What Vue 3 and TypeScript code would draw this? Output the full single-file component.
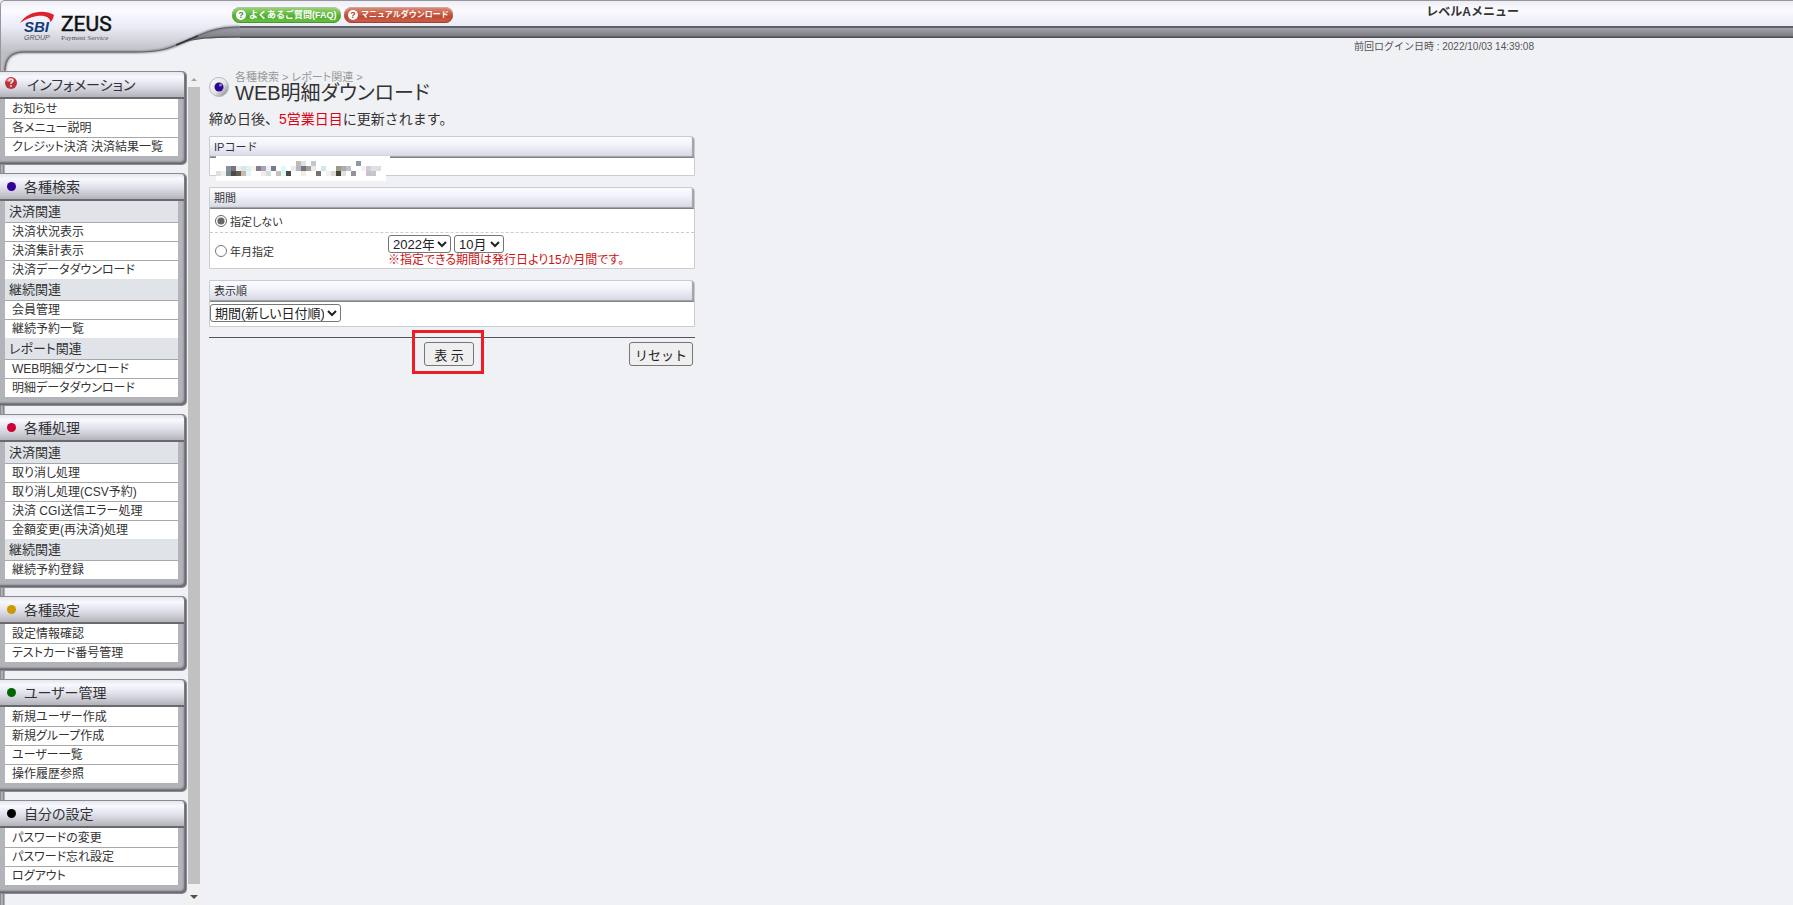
<script setup lang="ts">
import { ref } from 'vue'

interface MenuGroup {
  title: string
  tone: string
  rows: { text: string; sub?: boolean }[]
}

const item = (text: string) => ({ text })
const sub = (text: string) => ({ text, sub: true })

const menu: MenuGroup[] = [
  {
    title: 'インフォメーション',
    tone: 'help',
    rows: [item('お知らせ'), item('各メニュー説明'), item('クレジット決済 決済結果一覧')],
  },
  {
    title: '各種検索',
    tone: 'indigo',
    rows: [
      sub('決済関連'),
      item('決済状況表示'),
      item('決済集計表示'),
      item('決済データダウンロード'),
      sub('継続関連'),
      item('会員管理'),
      item('継続予約一覧'),
      sub('レポート関連'),
      item('WEB明細ダウンロード'),
      item('明細データダウンロード'),
    ],
  },
  {
    title: '各種処理',
    tone: 'red',
    rows: [
      sub('決済関連'),
      item('取り消し処理'),
      item('取り消し処理(CSV予約)'),
      item('決済 CGI送信エラー処理'),
      item('金額変更(再決済)処理'),
      sub('継続関連'),
      item('継続予約登録'),
    ],
  },
  { title: '各種設定', tone: 'gold', rows: [item('設定情報確認'), item('テストカード番号管理')] },
  {
    title: 'ユーザー管理',
    tone: 'green',
    rows: [item('新規ユーザー作成'), item('新規グループ作成'), item('ユーザー一覧'), item('操作履歴参照')],
  },
  {
    title: '自分の設定',
    tone: 'black',
    rows: [item('パスワードの変更'), item('パスワード忘れ設定'), item('ログアウト')],
  },
]

const period = ref('none')
const year = ref('2022年')
const month = ref('10月')
const order = ref('期間(新しい日付順)')

// Masked code: column, row, colour of each 5px cell
const mask: [number, number, string][] = [
  [0, 2, '#e4dfdf'], [1, 2, '#f5efec'], [2, 1, '#8493a0'], [2, 2, '#7b8b98'], [3, 1, '#7b757b'], [3, 2, '#4b4a48'],
  [4, 1, '#f0eeee'], [4, 2, '#625f58'], [5, 1, '#e2e2e2'], [5, 2, '#c5bcae'], [6, 1, '#d8f3f7'], [6, 2, '#e4f5f7'],
  [7, 1, '#faf2e8'], [8, 1, '#847c86'], [9, 1, '#a5a3c0'], [9, 2, '#f6ebe1'], [10, 1, '#e8f2f5'], [10, 2, '#d2dee2'],
  [11, 1, '#737b84'], [12, 2, '#c9c1b6'], [13, 1, '#defafa'], [13, 2, '#defafa'], [14, 2, '#4b4a48'], [15, 1, '#eeece8'],
  [16, 0, '#c0bdae'], [16, 1, '#b4b8bd'], [17, 0, '#d8e4e8'], [17, 1, '#75727e'], [18, 1, '#a59b9d'], [17, 2, '#f3ece5'],
  [19, 0, '#c8c8cb'], [19, 1, '#e9ecef'], [20, 2, '#77736f'], [21, 1, '#d6e7ec'], [22, 2, '#eef3f4'], [23, 2, '#e0d8d2'],
  [24, 1, '#a39a83'], [24, 2, '#45423a'], [25, 1, '#a7adb2'], [25, 2, '#e4e0dc'], [26, 1, '#bfc0c3'], [27, 2, '#92939d'],
  [28, 0, '#8f99a1'], [29, 1, '#f6eff6'], [30, 1, '#d4cad9'], [30, 2, '#cbc1cd'], [31, 1, '#d8e3e6'], [31, 2, '#c8c5c8'],
  [32, 1, '#e2dede'],
]
</script>

<template>
  <div class="page">
    <header class="top">
      <div class="band">
        <nav class="pills">
          <a class="pill pill-green" href="#"><span class="q">?</span>よくあるご質問(FAQ)</a>
          <a class="pill pill-red" href="#"><span class="q">?</span><span class="small">マニュアルダウンロード</span></a>
        </nav>
        <strong class="level">レベルAメニュー</strong>
      </div>
      <p class="login">前回ログイン日時 : 2022/10/03 14:39:08</p>
      <svg class="corner" width="240" height="71" viewBox="0 0 240 71" role="img" aria-label="SBI GROUP ZEUS Payment Service">
        <defs>
          <linearGradient id="metal" gradientUnits="userSpaceOnUse" x1="0" y1="0" x2="0" y2="53">
            <stop offset="0" stop-color="#ededf4" />
            <stop offset=".2" stop-color="#fbfbff" />
            <stop offset=".5" stop-color="#eaecf6" />
            <stop offset="1" stop-color="#bdbec4" />
          </linearGradient>
          <linearGradient id="bar" gradientUnits="userSpaceOnUse" x1="0" y1="27" x2="0" y2="38">
            <stop offset="0" stop-color="#a3a4ab" />
            <stop offset="1" stop-color="#7c7c83" />
          </linearGradient>
          <filter id="soft"><feGaussianBlur stdDeviation="1" /></filter>
        </defs>
        <rect width="240" height="71" fill="#f0f1f5" />
        <path d="M240 27C213 27 202 34 180 43C196 38 207 37 240 37Z" fill="url(#bar)" />
        <path d="M240 37C207 37 196 38 180 43" fill="none" stroke="#55555b" stroke-width="1.5" />
        <path d="M0 0H240V27C213 27 202 34 184 42C168 49 160 52 135 52H24C10 52 5 60 5 71H0Z" fill="url(#metal)" />
        <path d="M240 27C213 27 202 34 184 42C168 49 160 52 135 52H24C10 52 5 60 5 71" fill="none" stroke="#77777e" stroke-width="2" filter="url(#soft)" />
        <path d="M240 27C213 27 202 34 184 42C168 49 160 52 135 52H24C10 52 5 60 5 71" fill="none" stroke="#5d5d63" />
        <path d="M198 36C190 39 184 42 176 45" fill="none" stroke="#333" stroke-width="1.5" />
        <path d="M.5 71V5Q.5 .5 5 .5H240" fill="none" stroke="#96969c" />
        <text x="24" y="32" class="sbi">SBI</text>
        <path d="M20 23C28 11 44 9 54 15C53 19 52 21 50 22C51 15 36 12 20 23Z" fill="#e0202c" />
        <text x="24" y="40" class="group">GROUP</text>
        <text x="61" y="31" class="zeus">ZEUS</text>
        <text x="61" y="40" class="pay">Payment Service</text>
      </svg>
    </header>

    <div class="body">
      <aside class="side">
        <section v-for="g in menu" :key="g.title" class="group-box">
          <h2 class="group-head">
            <svg v-if="g.tone === 'help'" class="help" width="14" height="14" viewBox="0 0 14 14" aria-hidden="true">
              <circle cx="7" cy="7" r="6" fill="#b8323a" />
              <ellipse cx="6" cy="4" rx="4" ry="2" fill="#dc7a7e" />
              <path d="M5 5Q5 3 7 3T9 5Q9 6 7 7V8M7 9V11" fill="none" stroke="#fff" stroke-width="1.2" />
            </svg>
            <i v-else class="dot" :class="g.tone"></i>
            {{ g.title }}
          </h2>
          <ul class="rows">
            <li v-for="(r, i) in g.rows" :key="i" :class="r.sub ? 'sub' : 'item'">
              <span v-if="r.sub">{{ r.text }}</span>
              <a v-else href="#">{{ r.text }}</a>
            </li>
          </ul>
        </section>
      </aside>
      <div class="scroll" aria-hidden="true">
        <svg width="12" height="16" viewBox="0 0 12 16"><path d="M3 10L6 7L9 10Z" fill="#a3a3a3" /></svg>
        <div class="thumb"></div>
        <svg width="12" height="21" viewBox="0 0 12 21"><path d="M2 11H10L6 15Z" fill="#505050" /></svg>
      </div>

      <main class="main">
        <div class="title">
          <svg class="orb" width="20" height="22" viewBox="0 0 20 22" aria-hidden="true">
            <defs>
              <linearGradient id="orb" x1="0" y1="0" x2="1" y2="1">
                <stop offset="0" stop-color="#fff" />
                <stop offset=".55" stop-color="#e4e4e6" />
                <stop offset="1" stop-color="#77777b" />
              </linearGradient>
            </defs>
            <circle cx="10" cy="11" r="9.5" fill="url(#orb)" stroke="#b9b9bd" />
            <circle cx="10" cy="11" r="4.5" fill="#2c0894" />
            <circle cx="11.5" cy="9" r="1.5" fill="#8f80c8" />
          </svg>
          <div>
            <p class="crumbs">各種検索 &gt; レポート関連 &gt;</p>
            <h1>WEB明細ダウンロード</h1>
          </div>
        </div>
        <p class="notice">締め日後、<em>5営業日目</em>に更新されます。</p>

        <form @submit.prevent>
          <section class="box">
            <h3>IPコード</h3>
            <div class="cell code">
              <svg class="mask" width="174" height="25" viewBox="0 0 174 25" role="img" aria-label="IPコード">
                <path d="M0 0H174V9H170V25H0Z" fill="#fff" />
                <rect v-for="(m, i) in mask" :key="i" :x="m[0] * 5" :y="m[1] * 5 + 5" width="5" height="5" :fill="m[2]" />
              </svg>
            </div>
          </section>

          <section class="box">
            <h3>期間</h3>
            <div class="cell line first">
              <label><input v-model="period" type="radio" name="period" value="none" />指定しない</label>
            </div>
            <div class="cell line second">
              <label><input v-model="period" type="radio" name="period" value="month" />年月指定</label>
              <div>
                <div class="picks">
                  <select v-model="year" class="year" aria-label="年"><option>2022年</option></select>
                  <select v-model="month" class="month" aria-label="月"><option>10月</option></select>
                </div>
                <p class="warn">※指定できる期間は発行日より15か月間です。</p>
              </div>
            </div>
          </section>

          <section class="box">
            <h3>表示順</h3>
            <div class="cell sort">
              <select v-model="order" class="order" aria-label="表示順"><option>期間(新しい日付順)</option></select>
            </div>
          </section>

          <div class="actions">
            <span class="mark"><button type="submit" class="show">表 示</button></span>
            <button type="reset" class="reset">リセット</button>
          </div>
        </form>
      </main>
    </div>
  </div>
</template>

<style>
body {
  margin: 0;
  background: #f0f1f5;
}
</style>

<style scoped>
.page {
  min-height: 100vh;
  box-sizing: border-box;
  display: flex;
  flex-direction: column;
  color: #333;
  font-family: "Liberation Sans", "Noto Sans CJK JP", sans-serif;
  font-size: 12px;
}
h1, h2, h3, p, ul {
  margin: 0;
  padding: 0;
  font-weight: normal;
}
a {
  color: inherit;
  text-decoration: none;
}
.top {
  position: relative;
  height: 71px;
}
.band {
  box-sizing: border-box;
  height: 38px;
  padding: 7px 274px 0 232px;
  display: flex;
  justify-content: space-between;
  align-items: flex-start;
  background: linear-gradient(#96969c 1px, #ededf4 1px, #fbfbff 10px, #eaecf6 26px, #5f5f65 26px, #5f5f65 28px, #a3a4ab 28px, #7c7c83 36px, #4c4c52 37px);
}
.pills {
  position: relative;
  z-index: 1;
  display: flex;
  gap: 3px;
}
.pill {
  box-sizing: border-box;
  width: 109px;
  height: 16px;
  padding-left: 4px;
  display: flex;
  align-items: center;
  gap: 3px;
  border-radius: 8px;
  color: #fff;
  font-size: 9px;
  font-weight: bold;
  line-height: 16px;
  white-space: nowrap;
}
.small {
  font-size: 8px;
}
.pill-green {
  background: linear-gradient(#9bd67c, #52ae2e 60%, #6cc446);
  box-shadow: inset 0 -1px 1px #4b8e2e, inset 0 1px 1px #b4c8a8;
}
.pill-red {
  background: linear-gradient(#dc8c78, #bf4a33 60%, #cf6550);
  box-shadow: inset 0 -1px 1px #96402f, inset 0 1px 1px #d3aaa0;
}
.q {
  width: 10px;
  height: 10px;
  border-radius: 5px;
  background: #fff;
  color: #4a8a34;
  font-size: 9px;
  line-height: 10px;
  text-align: center;
}
.pill-red .q {
  color: #b04030;
}
.level {
  font-size: 12px;
  line-height: 11px;
}
.login {
  padding: 1px 259px 0 0;
  text-align: right;
  font-size: 10px;
  line-height: 16px;
  color: #555;
}
.corner {
  position: absolute;
  left: 0;
  top: 0;
}
.sbi {
  font: italic bold 15px "Liberation Sans", sans-serif;
  fill: #173a78;
}
.group {
  font: italic 7px "Liberation Sans", sans-serif;
  fill: #555;
}
.zeus {
  font: 21px Roboto, sans-serif;
  fill: #111;
  stroke: #111;
  stroke-width: .5px;
}
.pay {
  font: 7px "Liberation Serif", serif;
  fill: #555;
}
.body {
  flex: 1;
  display: flex;
}
.side {
  width: 188px;
  padding-bottom: 10px;
  box-sizing: border-box;
  display: flex;
  flex-direction: column;
  gap: 8px;
  background: linear-gradient(90deg, #8b8b91 1px, #b4b5bb 1px, #a5a6ac 3px, #707076 4px, #f0f1f5 5px);
}
.group-box {
  width: 187px;
  box-sizing: border-box;
  padding: 0 8px 8px 0;
  border: solid #8a8a90;
  border-width: 1px 1px 1px 0;
  border-radius: 0 5px 5px 0;
  background: linear-gradient(#b6b7bd, #b2b3b9);
  box-shadow: inset -2px -2px 2px #66666c;
}
.group-head {
  height: 27px;
  box-sizing: border-box;
  margin-right: -6px;
  padding-left: 7px;
  display: flex;
  align-items: center;
  gap: 8px;
  border-bottom: 2px solid #69696f;
  border-top-right-radius: 4px;
  background: linear-gradient(#e6e6ee, #f8f8ff 20%, #dfe0ea 55%, #b3b4ba);
  font-size: 14px;
  line-height: 24px;
  font-feature-settings: "palt";
}
.help {
  margin: -4px 1px 0 -3px;
}
.dot {
  width: 9px;
  height: 9px;
  border-radius: 5px;
}
.indigo { background: #330099; }
.red { background: #cc0033; }
.gold { background: #cc9900; }
.green { background: #006600; }
.black { background: #000; }
.rows {
  margin-left: 5px;
  list-style: none;
  background: #fff;
}
.rows li {
  box-sizing: border-box;
  white-space: nowrap;
}
.item {
  height: 19px;
  padding-left: 7px;
  font-size: 12px;
  line-height: 20px;
  font-feature-settings: "palt";
}
.item + .item, .sub + .item {
  border-top: 1px solid #a8a8ac;
  line-height: 19px;
}
.sub {
  height: 21px;
  padding-left: 4px;
  background: #e0e3e8;
  font-size: 13px;
  line-height: 21px;
  font-feature-settings: "palt";
}
.scroll {
  width: 12px;
  display: flex;
  flex-direction: column;
  background: #f1f1f1;
}
.thumb {
  flex: 1;
  background: #c1c1c1;
}
.main {
  flex: 1;
  max-width: 486px;
  padding-left: 9px;
}
.title {
  display: flex;
  align-items: center;
  gap: 6px;
  font-feature-settings: "palt";
}
.crumbs {
  color: #999;
  font-size: 11px;
  line-height: 12px;
}
h1 {
  font-size: 20px;
  line-height: 20px;
}
.notice {
  margin-top: 6px;
  font-size: 14px;
  line-height: 20px;
}
.notice em {
  color: #e00010;
  font-style: normal;
}
.box {
  margin-top: 11px;
  border: 1px solid #ccccd0;
  border-top-right-radius: 4px;
  background: #fff;
}
.notice + form .box:first-child {
  margin-top: 7px;
}
h3 {
  box-sizing: border-box;
  height: 21px;
  padding-left: 4px;
  border-bottom: 1px solid #808086;
  border-top-right-radius: 3px;
  background: linear-gradient(#fbfbff, #f3f4fc 35%, #d6d8e2);
  box-shadow: inset -2px -1px 1px #a0a0a6;
  font-size: 11px;
  line-height: 20px;
}
.cell {
  box-sizing: border-box;
}
.code {
  position: relative;
  height: 17px;
}
.mask {
  position: absolute;
  left: 6px;
  top: -2px;
}
.line {
  display: flex;
  align-items: center;
}
.line label {
  width: 178px;
  display: flex;
  align-items: center;
  font-size: 11px;
  font-feature-settings: "palt";
}
.line input {
  width: 12px;
  height: 12px;
  margin: 0 3px 0 5px;
  accent-color: #666;
}
.first {
  height: 24px;
  padding-top: 1px;
  border-bottom: 1px dashed #ccc;
}
.second {
  height: 35px;
  padding-top: 1px;
}
.picks {
  display: flex;
  gap: 3px;
}
select {
  height: 18px;
  box-sizing: border-box;
  border: 1px solid #767676;
  border-radius: 3px;
  padding: 0;
  background-color: #fff;
  color: #222;
  font-family: "Liberation Sans", "Noto Sans CJK JP", sans-serif;
  font-size: 13px;
  font-feature-settings: "palt";
  line-height: 16px;
}
.year { width: 63px; }
.month { width: 50px; }
.order { width: 131px; }
.warn {
  color: #cc1111;
  font-size: 12px;
  line-height: 14px;
  font-feature-settings: "palt";
}
.sort {
  height: 24px;
  padding-top: 2px;
}
.actions {
  position: relative;
  margin-top: 10px;
  border-top: 1px solid #55555b;
  padding: 4px 2px 0 0;
  display: flex;
  justify-content: flex-end;
}
button {
  box-sizing: border-box;
  height: 24px;
  padding: 0;
  border: 1px solid #767676;
  border-radius: 3px;
  background: #efefef;
  color: #222;
  font-family: "Liberation Sans", "Noto Sans CJK JP", sans-serif;
  font-size: 13px;
}
.mark {
  position: absolute;
  left: 203px;
  top: -8px;
  padding: 9px 7px 5px 9px;
  border: 3px solid #ee1c24;
  display: flex;
}
.show { width: 50px; }
.reset { width: 64px; }
</style>
